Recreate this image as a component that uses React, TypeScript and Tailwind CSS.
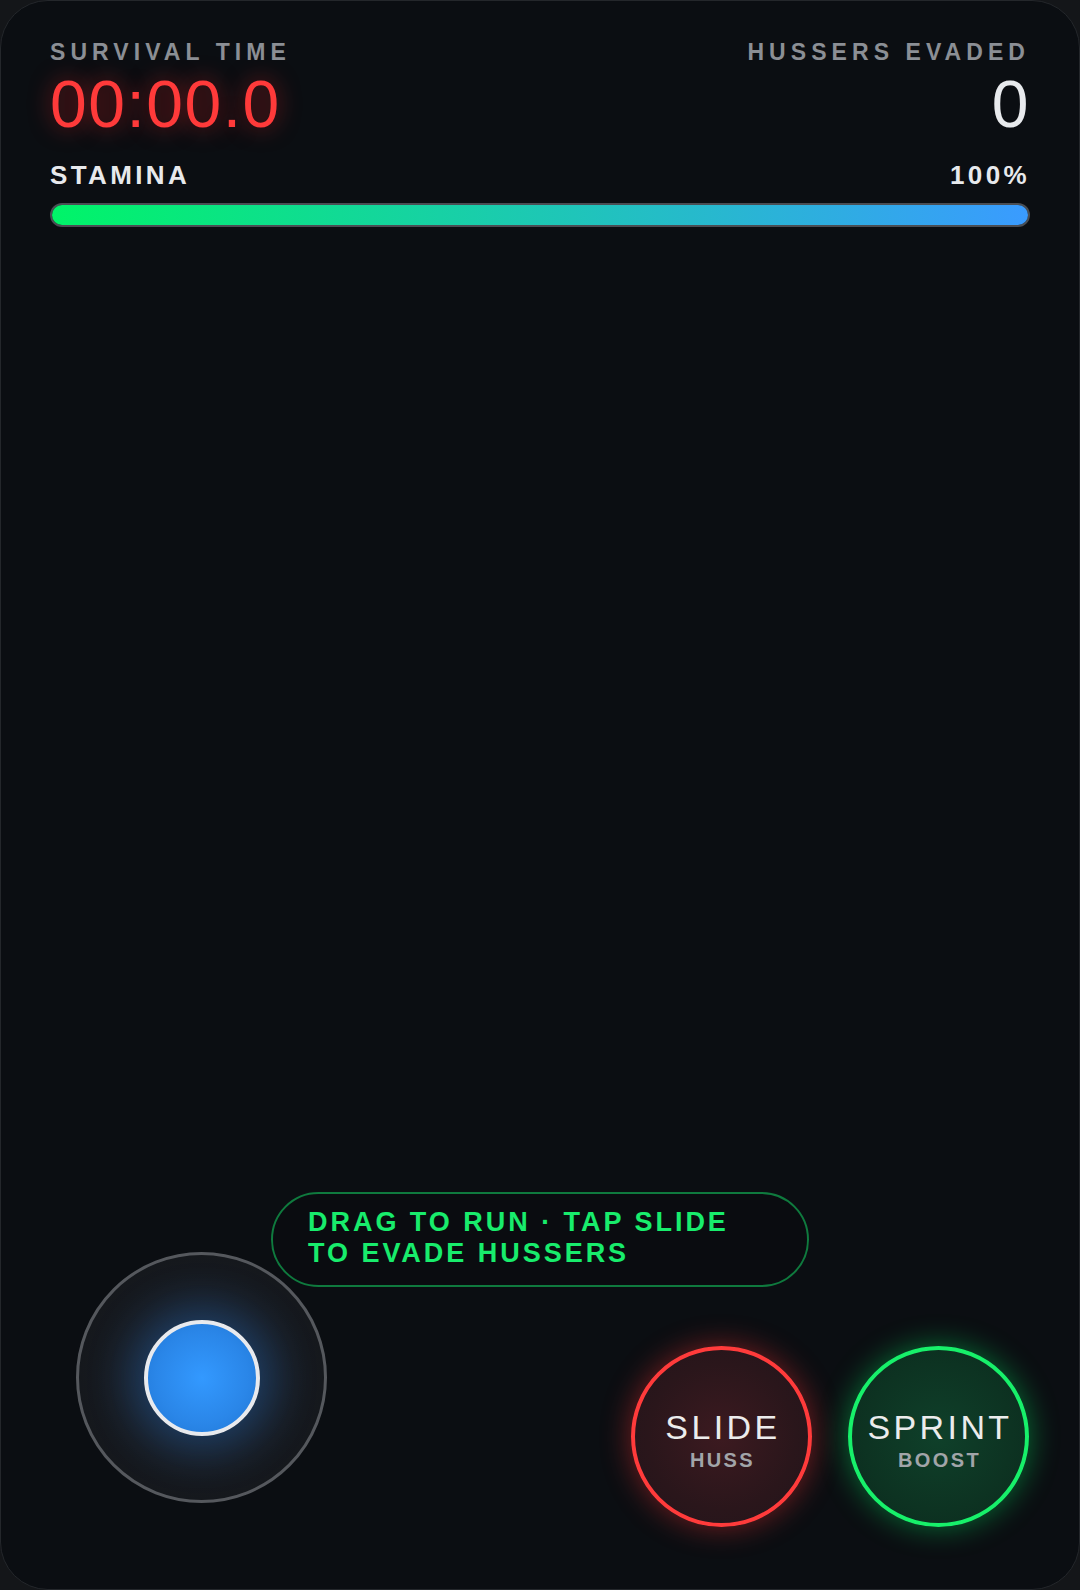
const font = { fontFamily: '"Liberation Sans", Arial, sans-serif' };

function Stat({ label, value, align, valueClass }: { label: string; value: string; align: "start" | "end"; valueClass: string }) {
  return (
    <div className={align === "end" ? "flex flex-col items-end" : "flex flex-col items-start"}>
      <span className="text-[23px] leading-none font-bold tracking-[0.22em] text-[#8b8f95]">{label}</span>
      <span className={"mt-[7px] text-[66px] leading-none tracking-[1.5px] " + valueClass}>{value}</span>
    </div>
  );
}

function ActionButton({ title, sub, ring }: { title: string; sub: string; ring: "red" | "green" }) {
  const look =
    ring === "red"
      ? "border-[#ff3b3b] bg-[radial-gradient(circle,#3c1a20_0%,#2a161b_60%,#22141a_100%)] shadow-[0_0_30px_rgba(255,50,50,0.45)]"
      : "border-[#17f06a] bg-[radial-gradient(circle,#0f402a_0%,#0d3322_60%,#0b2a1d_100%)] shadow-[0_0_30px_rgba(0,235,100,0.45)]";
  return (
    <button className={"flex h-[181px] w-[181px] flex-col items-center justify-center rounded-full border-[4px] pt-[6px] " + look}>
      <span className="pl-[3px] text-[34px] leading-none tracking-[0.1em] text-[#ececec]">{title}</span>
      <span className="mt-[6px] pl-[2px] text-[20px] leading-none font-bold tracking-[0.12em] text-[#a2a5a9]">{sub}</span>
    </button>
  );
}

export default function App() {
  return (
    <div className="h-[1590px] w-[1080px] bg-[#141619]" style={font}>
      <div className="relative flex h-full flex-col overflow-hidden rounded-[48px] border border-[#24272b] bg-[#0b0e12]">
        <div className="px-[49px] pt-[40px]">
          <div className="flex justify-between">
            <Stat
              label="SURVIVAL TIME"
              value="00:00.0"
              align="start"
              valueClass="text-[#ff3a3a] [text-shadow:0_0_22px_rgba(255,40,40,0.55)]"
            />
            <Stat label="HUSSERS EVADED" value="0" align="end" valueClass="text-[#e8eaed]" />
          </div>
          <div className="mt-[25px] flex justify-between text-[26px] leading-none font-bold tracking-[0.13em] text-[#e7e9ec]">
            <span>STAMINA</span>
            <span>100%</span>
          </div>
          <div className="mt-[15px] h-[24px] rounded-full border-[2px] border-[#4a4e54] bg-[#1a1d21]">
            <div className="h-full w-full rounded-full bg-[linear-gradient(90deg,#00f468,#1dc8b4_50%,#3a9bff)]" />
          </div>
        </div>

        <div className="flex-1" />

        <div className="absolute left-1/2 top-[1191px] w-[538px] -translate-x-1/2 rounded-full border-[2px] border-[#0f7a3e] bg-[#0a0d10]/80 px-[35px] pt-[13px] pb-[17px]">
          <p className="text-[27px] leading-[30.5px] font-bold tracking-[0.11em] text-[#18ec6c]">
            DRAG TO RUN · TAP SLIDE TO EVADE HUSSERS
          </p>
        </div>

        <div className="flex items-end justify-between pr-[50px] pb-[62px] pl-[75px]">
          <div className="mb-[24px] flex h-[251px] w-[251px] items-center justify-center rounded-full border-[3px] border-[#55585d] bg-[radial-gradient(circle,#1f232a_0%,#171a1f_55%,#111418_100%)]">
            <div className="h-[116px] w-[116px] rounded-full border-[4px] border-[#e8eaee] bg-[radial-gradient(circle,#3399ff_0%,#2a86e8_60%,#1f76d4_100%)] shadow-[0_0_44px_14px_rgba(40,140,255,0.3)]" />
          </div>
          <div className="flex gap-[36px]">
            <ActionButton title="SLIDE" sub="HUSS" ring="red" />
            <ActionButton title="SPRINT" sub="BOOST" ring="green" />
          </div>
        </div>
      </div>
    </div>
  );
}
